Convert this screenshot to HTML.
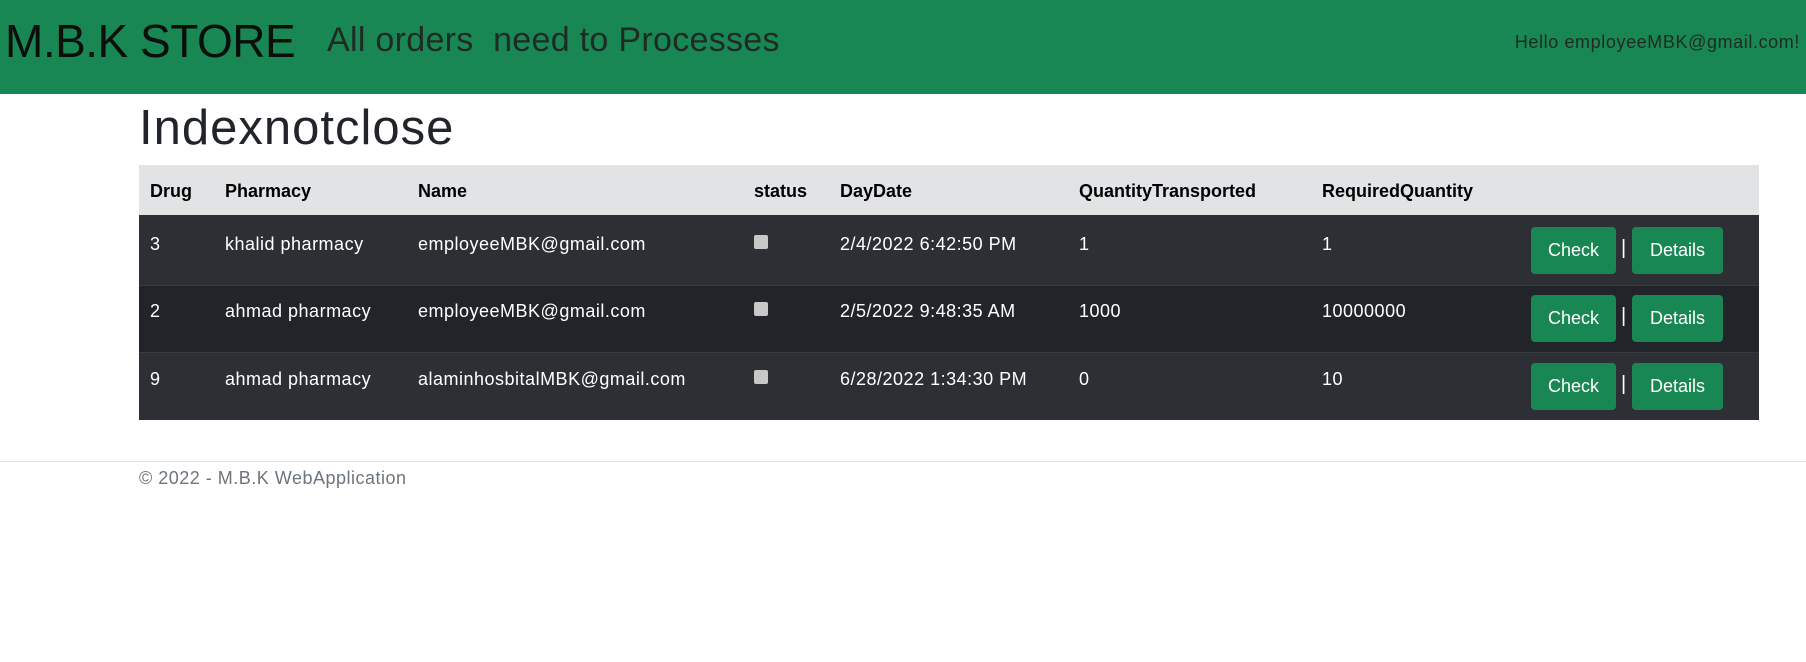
<!DOCTYPE html>
<html><head><meta charset="utf-8"><style>
*{margin:0;padding:0;box-sizing:border-box}
body{width:1806px;height:662px;background:#fff;font-family:"Liberation Sans",sans-serif;position:relative;overflow:hidden;color:#212529}
.nav{position:absolute;left:0;top:0;width:1806px;height:94px;background:#198754}
.a{position:absolute;white-space:nowrap}
.brand{left:5px;top:14px;font-size:46px;color:#0a0f0c;letter-spacing:-0.5px}
.sub{left:327px;top:21px;font-size:34px;color:#1f2a24;letter-spacing:0.3px}
.hello{right:6px;top:32px;font-size:18px;color:#1f2a24;letter-spacing:0.6px}
h1{position:absolute;left:139px;top:100px;font-size:49px;font-weight:normal;color:#212529;letter-spacing:1px}
.th{position:absolute;left:139px;top:165px;width:1620px;height:50px;background:#e2e3e5}
.row{position:absolute;left:139px;width:1620px}
.r1{top:215px;height:70px;background:#2c3034}
.r2{top:285px;height:67px;background:#212529;border-top:1px solid #373b3e}
.r3{top:352px;height:68px;background:#2c3034;border-top:1px solid #373b3e}
.h{font-size:18px;font-weight:bold;color:#000;top:181px}
.c{font-size:18px;color:#fff;letter-spacing:0.5px}
.btn{position:absolute;background:#198754;color:#fff;font-size:18px;border-radius:4px;height:47px;line-height:47px;text-align:center}
.cb{position:absolute;width:14px;height:14px;background:#c8c8c8;border-radius:2px}
.sep{position:absolute;color:#fff;font-size:20px}
.foot{position:absolute;left:0;top:461px;width:1806px;border-top:1px solid #dee2e6}
</style></head><body>
<div class="nav"></div>
<div class="a brand">M.B.K STORE</div>
<div class="a sub">All orders&nbsp; need to Processes</div>
<div class="a hello">Hello employeeMBK@gmail.com!</div>
<h1>Indexnotclose</h1>
<div class="th"></div>
<div class="a h" style="left:150px">Drug</div>
<div class="a h" style="left:225px">Pharmacy</div>
<div class="a h" style="left:418px">Name</div>
<div class="a h" style="left:754px">status</div>
<div class="a h" style="left:840px">DayDate</div>
<div class="a h" style="left:1079px">QuantityTransported</div>
<div class="a h" style="left:1322px">RequiredQuantity</div>
<div class="row r1"></div><div class="row r2"></div><div class="row r3"></div>

<div class="a c" style="left:150px;top:234px">3</div>
<div class="a c" style="left:225px;top:234px">khalid pharmacy</div>
<div class="a c" style="left:418px;top:234px">employeeMBK@gmail.com</div>
<div class="cb" style="left:754px;top:235px"></div>
<div class="a c" style="left:840px;top:234px">2/4/2022 6:42:50 PM</div>
<div class="a c" style="left:1079px;top:234px">1</div>
<div class="a c" style="left:1322px;top:234px">1</div>
<div class="btn" style="left:1531px;top:227px;width:85px">Check</div>
<div class="sep" style="left:1621px;top:237px">|</div>
<div class="btn" style="left:1632px;top:227px;width:91px">Details</div>

<div class="a c" style="left:150px;top:301px">2</div>
<div class="a c" style="left:225px;top:301px">ahmad pharmacy</div>
<div class="a c" style="left:418px;top:301px">employeeMBK@gmail.com</div>
<div class="cb" style="left:754px;top:302px"></div>
<div class="a c" style="left:840px;top:301px">2/5/2022 9:48:35 AM</div>
<div class="a c" style="left:1079px;top:301px">1000</div>
<div class="a c" style="left:1322px;top:301px">10000000</div>
<div class="btn" style="left:1531px;top:295px;width:85px">Check</div>
<div class="sep" style="left:1621px;top:305px">|</div>
<div class="btn" style="left:1632px;top:295px;width:91px">Details</div>

<div class="a c" style="left:150px;top:369px">9</div>
<div class="a c" style="left:225px;top:369px">ahmad pharmacy</div>
<div class="a c" style="left:418px;top:369px">alaminhosbitalMBK@gmail.com</div>
<div class="cb" style="left:754px;top:370px"></div>
<div class="a c" style="left:840px;top:369px">6/28/2022 1:34:30 PM</div>
<div class="a c" style="left:1079px;top:369px">0</div>
<div class="a c" style="left:1322px;top:369px">10</div>
<div class="btn" style="left:1531px;top:363px;width:85px">Check</div>
<div class="sep" style="left:1621px;top:373px">|</div>
<div class="btn" style="left:1632px;top:363px;width:91px">Details</div>

<div class="foot"></div>
<div class="a" style="left:139px;top:468px;font-size:18px;color:#6c757d;letter-spacing:0.5px">© 2022 - M.B.K WebApplication</div>
</body></html>
